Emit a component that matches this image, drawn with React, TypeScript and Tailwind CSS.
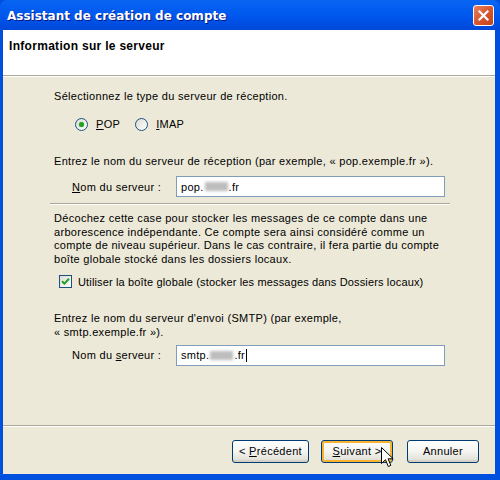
import React from "react";

const ui = { fontFamily: '"Liberation Sans", Arial, sans-serif', letterSpacing: "0.3px" };

function Radio({ checked }: { checked?: boolean }) {
  return (
    <span className="w-[13px] h-[13px] rounded-full border border-[#1C5180] bg-gradient-to-br from-[#DCDBD5] to-[#FFFFFF] flex items-center justify-center shrink-0">
      {checked && <span className="w-[5px] h-[5px] rounded-full bg-[#21A121] shadow-[0_0_1px_#5CC05C]" />}
    </span>
  );
}

function Checkbox() {
  return (
    <span className="w-[13px] h-[13px] border border-[#1C5180] bg-gradient-to-br from-[#DCDBD5] to-[#FFFFFF] flex items-center justify-center shrink-0">
      <svg width="9" height="9" viewBox="0 0 9 9">
        <path d="M1 4.2 L3.4 6.6 L8 1.8" fill="none" stroke="#21A121" strokeWidth="2" />
      </svg>
    </span>
  );
}

function Blur() {
  return <span className="inline-block w-[23px] h-[9px] align-middle bg-[#BDBDBD] blur-[1.5px] mx-[1px]" />;
}

function Field({ label, children }: { label: React.ReactNode; children: React.ReactNode }) {
  return (
    <div className="flex items-center">
      <span className="w-[126px] pl-[22px]">{label}</span>
      <div className="w-[269px] h-[21px] border border-[#7F9DB9] bg-white flex items-center pl-[4px] text-black">
        {children}
      </div>
    </div>
  );
}

function Button({ children, hover }: { children: React.ReactNode; hover?: boolean }) {
  return (
    <div
      className={`h-[23px] rounded-[3px] border border-[#003C74] flex items-center justify-center bg-gradient-to-b from-[#FFFFFF] via-[#F4F4F0] to-[#DEDCD2] ${
        hover ? "shadow-[inset_0_0_0_2px_#F8B330]" : "shadow-[inset_0_-2px_0_#D6D0C5]"
      }`}
    >
      {children}
    </div>
  );
}

export default function App() {
  return (
    <div className="w-[500px] h-[480px] flex flex-col bg-[#0050E0] text-[11px] text-black" style={ui}>
      {/* Title bar */}
      <div className="h-[30px] shrink-0 flex items-center justify-between bg-gradient-to-b from-[#0A64F2] via-[#0058EE] to-[#0047D9] rounded-t-[7px] pl-[7px] pr-[6px]">
        <span
          className="text-white font-bold text-[12px] [text-shadow:1px_1px_0_#0A1883] mt-[2px]"
          style={{ fontFamily: '"DejaVu Sans", "Liberation Sans", sans-serif', letterSpacing: "0px" }}
        >
          Assistant de création de compte
        </span>
        <div className="w-[21px] h-[21px] rounded-[3px] border border-white bg-gradient-to-br from-[#E9805F] via-[#D9572E] to-[#C3421C] flex items-center justify-center">
          <svg width="11" height="11" viewBox="0 0 11 11">
            <path d="M1.5 1.5 L9.5 9.5 M9.5 1.5 L1.5 9.5" stroke="white" strokeWidth="2.2" strokeLinecap="square" />
          </svg>
        </div>
      </div>

      {/* Client area */}
      <div className="flex-1 flex flex-col ml-[3px] mr-[5px] mb-[6px] bg-[#ECE9D8]">
        {/* Header */}
        <div className="h-[46px] bg-white border-b border-[#ACA899] pl-[6px] pt-[7px] font-bold text-[12px]">
          Information sur le serveur
        </div>
        <div className="h-px bg-white" />

        {/* Body */}
        <div className="flex-1 flex flex-col ml-[47px] w-[400px] leading-[14px]">
          <div className="pl-[4px] mt-[12px]">Sélectionnez le type du serveur de réception.</div>

          <div className="flex items-center h-[14px] mt-[14px] pl-[25px]">
            <Radio checked />
            <span className="ml-[8px]">
              <u>P</u>OP
            </span>
            <span className="ml-[15px]">
              <Radio />
            </span>
            <span className="ml-[8px]">
              <u>I</u>MAP
            </span>
          </div>

          <div className="pl-[4px] mt-[23px]">
            Entrez le nom du serveur de réception (par exemple, « pop.exemple.fr »).
          </div>

          <div className="mt-[8px]">
            <Field
              label={
                <>
                  <u>N</u>om du serveur :
                </>
              }
            >
              pop.
              <Blur />
              .fr
            </Field>
          </div>

          <div className="mt-[6px] h-px bg-[#ACA899]" />
          <div className="h-px bg-white" />

          <div className="pl-[4px] mt-[7px] leading-[13.7px]">
            Décochez cette case pour stocker les messages de ce compte dans une
            <br />
            arborescence indépendante. Ce compte sera ainsi considéré comme un
            <br />
            compte de niveau supérieur. Dans le cas contraire, il fera partie du compte
            <br />
            boîte globale stocké dans les dossiers locaux.
          </div>

          <div className="flex items-center mt-[8px] pl-[9px]">
            <Checkbox />
            <span className="ml-[6px] tracking-[0.15px]">
              Utiliser la boîte globale (stocker les messages dans Dossiers locaux)
            </span>
          </div>

          <div className="pl-[4px] mt-[22px]">
            Entrez le nom du serveur d'envoi (SMTP) (par exemple,
            <br />« smtp.exemple.fr »).
          </div>

          <div className="mt-[6px]">
            <Field
              label={
                <>
                  Nom du <u>s</u>erveur :
                </>
              }
            >
              smtp.
              <Blur />
              .fr
              <span className="inline-block w-px h-[13px] bg-black ml-[1px]" />
            </Field>
          </div>
        </div>

        {/* Footer */}
        <div className="h-px bg-[#ACA899]" />
        <div className="h-px bg-white" />
        <div className="h-[47px] flex justify-end items-start pt-[13px] pr-[16px] relative">
          <div className="w-[77px]">
            <Button>
              <span>&lt;&nbsp;</span>
              <u>P</u>récédent
            </Button>
          </div>
          <div className="w-[72px] ml-[12px]">
            <Button hover>
              <u>S</u>uivant&nbsp;&gt;
            </Button>
          </div>
          <div className="w-[72px] ml-[14px]">
            <Button>Annuler</Button>
          </div>
          <svg
            className="absolute left-[378px] top-[20px]"
            width="13"
            height="21"
            viewBox="0 0 13 21"
          >
            <path
              d="M0.5 0.5 L0.5 16.5 L4.5 12.7 L7.3 19.5 L9.8 18.4 L7.1 11.8 L12.2 11.8 Z"
              fill="white"
              stroke="black"
              strokeWidth="1"
              strokeLinejoin="miter"
            />
          </svg>
        </div>
      </div>
    </div>
  );
}
